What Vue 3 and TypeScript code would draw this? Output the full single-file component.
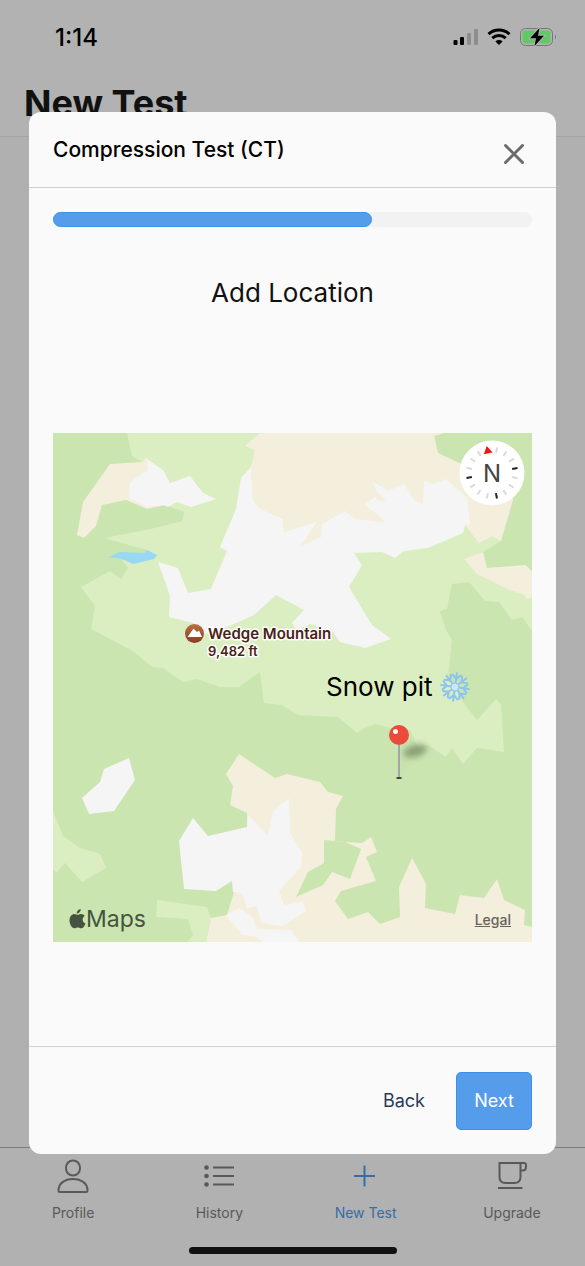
<script setup lang="ts">
import { computed, ref } from 'vue'

interface Tab {
  id: string
  label: string
}

const tabs: Tab[] = [
  { id: 'profile', label: 'Profile' },
  { id: 'history', label: 'History' },
  { id: 'new', label: 'New Test' },
  { id: 'upgrade', label: 'Upgrade' },
]

const activeTab = ref('new')
const step = ref(2)
const totalSteps = 3
const progress = computed(() => `${(step.value / totalSteps) * 100}%`)

// The compass is turned slightly west of north.
const heading = -11
const ticks = Array.from({ length: 16 }, (_, i) => ({
  angle: heading + i * 22.5,
  major: i % 4 === 0,
})).slice(1)
const flakeArms = [8, 53, 98, 143, 188, 233, 278, 323]
</script>

<template>
  <div class="screen">
    <div class="page">
      <div class="status">
        <span class="time">1:14</span>
        <svg class="status-icons" viewBox="0 0 104 20" width="104" height="20">
          <g>
            <rect x="0.5" y="13" width="4" height="5" rx="1" />
            <rect x="7" y="10" width="4" height="8" rx="1" />
            <rect class="faint" x="14" y="6" width="4" height="12" rx="1" />
            <rect class="faint" x="21" y="2" width="4" height="16" rx="1" />
          </g>
          <g class="wifi">
            <path d="M35.5 7.2A15.5 15.5 0 0 1 56.5 7.2" />
            <path d="M39.3 11.2A10 10 0 0 1 52.7 11.2" />
            <path class="solid" d="M46 18l-3.6-3.6a5.2 5.2 0 0 1 7.2 0z" />
          </g>
          <rect class="battery-case" x="67.5" y="1.5" width="32" height="17" rx="5" />
          <rect class="battery-level" x="69.5" y="3.5" width="28" height="13" rx="3" />
          <path class="battery-case-end" d="M102 7.500q2 2.500 0 5z" />
          <path class="bolt" d="M86.5 1L77 11.200h6L81.500 19 91 8.800h-6z" />
        </svg>
      </div>
      <header class="page-header"><h1>New Test</h1></header>
      <main class="page-body"></main>
      <nav class="tabs">
        <button
          v-for="tab in tabs"
          :key="tab.id"
          type="button"
          class="tab"
          :class="{ active: tab.id === activeTab }"
          @click="activeTab = tab.id"
        >
          <svg viewBox="0 0 40 40" width="40" height="40" class="tab-icon">
            <template v-if="tab.id === 'profile'">
              <rect x="13" y="4.500" width="14" height="15" rx="7" />
              <path d="M5.500 34.500C5.500 27.500 11.500 23 20 23s14.500 4.500 14.500 11.500c0 1-.5 1.500-1.500 1.500H7c-1 0-1.500-.5-1.500-1.500z" />
            </template>
            <template v-else-if="tab.id === 'history'">
              <path d="M14 11.500h21M14 20h21M14 28.500h21" />
              <g class="dots">
                <circle cx="7.500" cy="11.500" r="2.300" />
                <circle cx="7.500" cy="20" r="2.300" />
                <circle cx="7.500" cy="28.500" r="2.300" />
              </g>
            </template>
            <path v-else-if="tab.id === 'new'" d="M18.500 9.500v21M8 20h21" />
            <path
              v-else
              d="M28.500 7H32q2 0 2 2v2q0 3.500-3.500 3.500h-2M7.500 7h21v14q0 6-6 6h-9q-6 0-6-6zM6 32h24.500"
            />
          </svg>
          <span>{{ tab.label }}</span>
        </button>
      </nav>
      <div class="home"><i></i></div>
    </div>

    <div class="overlay">
      <section class="modal" role="dialog" aria-labelledby="dialog-title">
        <header class="modal-header">
          <h2 id="dialog-title">Compression Test (CT)</h2>
          <button type="button" class="close" aria-label="Close">
            <svg viewBox="0 0 24 24" width="24" height="24"><path d="M3.500 3.500l17 17M20.500 3.500l-17 17" /></svg>
          </button>
        </header>

        <div class="modal-body">
          <div class="track" role="progressbar" :aria-valuenow="step" aria-valuemin="0" :aria-valuemax="totalSteps">
            <div class="bar" :style="{ width: progress }"></div>
          </div>
          <h3>Add Location</h3>
          <div class="map-area">
            <div class="map">
              <svg class="terrain" viewBox="53 433 479 509">
                <defs>
                  <linearGradient id="peak-fill" x1="0" y1="0" x2="0" y2="1">
                    <stop offset="0" stop-color="#b8703f" />
                    <stop offset="1" stop-color="#8a3d25" />
                  </linearGradient>
                </defs>
                <rect class="forest" x="53" y="433" width="479" height="509" />
                <g class="meadow">
                  <path d="M127 433L132 456 142 462 163 505 184 512 182 521 150 529 104 538 147 550 150 555 122 560 128 568 121 579 110 571 81 587 95 606 91 629 133 651 152 667 163 668 183 682 197 679 220 687 239 687 260 672 264 703 282 705 298 715 338 717 357 733 363 729 375 724 390 728 410 730 417 746 428 745 446 757 452 748 463 764 477 748 504 752 501 704 496 699 477 720 465 705 448 678 452 640 446 630 440 611 447 609 452 584 469 582 485 601 499 602 512 620 522 617 532 631V433z" />
                  <path d="M53 811L63 836 80 848 100 854 106 868 82 882 65 863 57 872 53 870z" />
                  <path d="M157 900L207 907 211 918 206 942H187L193 935 188 919 156 917z" />
                </g>
                <path class="forest" d="M142 462L163 505 184 512 182 521 150 529 104 538 84 538 102 505 126 500 147 509z" />
                <path class="forest" d="M444 433L434 436 438 453 459 463 480 510 501 541 483 552 487 568 526 565 532 572V433z" />
                <g class="rock">
                  <path d="M260 433L245 446 255 450 251 467 253 501 261 509 283 519 284 532 318 521 300 547 400 535 440 510 465 525 479 543 492 536 501 541 513 500 505 470 459 463 438 453 434 436 444 433z" />
                  <path d="M464 559L483 552 487 568 526 565 532 572V597L527 599 523 594 509 590 477 574z" />
                  <path d="M110 464L142 462 147 457 152 470 150 500 165 505 147 509 126 500 102 505 96 526 84 538 77 535 83 502z" />
                  <path d="M239 754L275 778 287 774 320 782 328 792 343 796 336 809 335 841 345 842 362 843 371 837 377 852 366 857 376 881 341 891 335 901 348 919 368 912 380 924 400 917 399 887 412 858 426 884 425 908 455 914 460 895 484 898 497 879 504 900 525 910 524 925 532 927V942H206L211 918 227 915 234 892 247 870V813L230 805 233 786 226 774z" />
                </g>
                <path class="forest" d="M324 840L345 842 361 849 350 879 332 872 323 885 296 897 308 872 324 863z" />
                <g class="snow">
                  <path d="M251 467L241 478 236 509 220 547 227 551 211 589 188 593 178 568 158 562 170 596 169 617 193 623 205 634 227 627 254 615 276 595 304 610 292 623 297 630 310 624 333 632 340 642 365 648 391 639 372 625 349 587 362 565 354 553 382 552 395 558 404 551 428 548 463 533 465 525 470 524 467 498 446 479 434 484 424 481 423 504 414 500 404 484 388 491 373 482 377 492 386 500 378 501 375 497 364 505 381 517 387 527 383 522 355 519 345 511 322 524 321 537 300 547 318 521 284 532 283 519 261 509 253 501z" />
                  <path d="M147 459L163 470 170 483 190 476 203 493 216 499 191 507 177 502 168 507 163 505 147 507 129 498 130 482 148 470z" />
                  <path d="M129 758L135 780 114 811 89 814 82 798 100 782 104 769z" />
                  <path d="M193 818L208 836 247 827 248 815 268 836 273 811 289 798 290 833 302 853 301 867 290 879 279 891 284 905 303 902 306 911 292 920 282 926 261 923 257 906 247 908 242 893 233 892 232 881 216 891 184 889 179 841z" />
                  <path d="M226 915L239 908 253 917 257 929 291 930 300 942H263L254 936 242 935z" />
                </g>
                <path class="lake" d="M109 557L120 552 145 553 147 550 157 555 154 559 133 564 122 559z" />

                <circle class="peak" cx="194.500" cy="633.500" r="9.500" />
                <path class="peak-mark" d="M187.500 637L193.500 628.500 197 632 199 630.500 202 637z" />
                <text class="peak-name" x="208" y="639">Wedge Mountain</text>
                <text class="peak-height" x="208" y="656">9,482 ft</text>

                <text class="pit" x="326" y="696">Snow pit</text>
                <g transform="translate(455 687)" class="flake">
                  <path
                    v-for="arm in flakeArms"
                    :key="arm"
                    :transform="`rotate(${arm})`"
                    d="M0 0V-14M0-8l-4-4M0-8l4-4"
                  />
                  <circle r="4" />
                </g>

                <g class="shadow">
                  <path d="M400 776L405 755 420 742 427 748 408 756z" opacity=".2" />
                  <ellipse cx="415" cy="751" rx="12" ry="6" transform="rotate(-14 415 751)" />
                </g>
                <path class="needle" d="M399 745V777" />
                <path class="needle-foot" d="M396.500 778h5" />
                <circle class="pin" cx="399" cy="735" r="10" />
                <circle class="glint" cx="395.500" cy="731.500" r="2.500" />
              </svg>

              <button type="button" class="compass" aria-label="Compass">
                <svg viewBox="-33 -33 66 66" width="66" height="66">
                  <circle class="dial" r="32.500" />
                  <path
                    v-for="tick in ticks"
                    :key="tick.angle"
                    d="M0-26v5.500"
                    :class="tick.major ? 'tick major' : 'tick'"
                    :transform="`rotate(${tick.angle})`"
                  />
                  <path class="north" d="M0-27.500l4.500 7.500h-9z" transform="rotate(-11)" />
                  <text y="9">N</text>
                </svg>
              </button>

              <div class="brand">
                <svg viewBox="0 0 17 20" width="17" height="20">
                  <path d="M11.700 0c.2 2.300-1.700 4.500-3.900 4.500C7.500 2.300 9.500.3 11.700 0zM8.500 5.700c.8 0 2-.9 3.600-.8 1.600.1 2.900.8 3.700 2-3.200 2-2.700 6.200.7 7.500-.8 2.200-2.400 4.900-4.300 4.900-1.300 0-1.700-.8-3.400-.8s-2.200.8-3.500.8C2.900 19.300.5 15 .5 11.300c0-4 2.500-6.400 5-6.400 1.300 0 2.300.8 3 .8z" />
                </svg>
                <span>Maps</span>
              </div>
              <a class="legal" href="#legal">Legal</a>
            </div>
          </div>
        </div>

        <footer class="modal-footer">
          <button type="button" class="back" @click="step = Math.max(1, step - 1)">Back</button>
          <button type="button" class="next" @click="step = Math.min(totalSteps, step + 1)">Next</button>
        </footer>
      </section>
    </div>
  </div>
</template>

<style>
body {
  background: #b1b1b1;
}
</style>

<style scoped>
* {
  box-sizing: border-box;
}
h1,
h2,
h3 {
  margin: 0;
}
button {
  border: 0;
  padding: 0;
  background: none;
  font: inherit;
  color: inherit;
  cursor: pointer;
}
svg {
  display: block;
}
.screen {
  position: relative;
  min-height: 100vh;
  font-family: Inter, "Liberation Sans", sans-serif;
  color: #111;
}
.page {
  min-height: 100vh;
  display: flex;
  flex-direction: column;
  background: #b0b0b0;
}
.status {
  display: flex;
  justify-content: space-between;
  align-items: center;
  height: 74px;
  padding: 0 28px 0 55px;
  background: #b2b2b2;
}
.time {
  font-size: 24px;
  font-weight: 500;
  color: #000;
}
.faint {
  fill: #8d8d8d;
}
.wifi path {
  fill: none;
  stroke: #000;
  stroke-width: 3;
}
.wifi .solid {
  fill: #000;
  stroke: none;
}
.battery-case {
  fill: none;
  stroke: #777;
  stroke-width: 1;
}
.battery-case-end {
  fill: #777;
}
.battery-level {
  fill: #60c864;
}
.bolt {
  fill: #000;
  stroke: #b2b2b2;
  stroke-width: 2;
  paint-order: stroke;
}
.page-header {
  height: 63px;
  padding: 4px 24px 0;
  background: #b2b2b2;
  border-bottom: 1px solid #a3a3a3;
}
h1 {
  font-size: 36px;
  line-height: 50px;
  font-weight: 700;
}
.page-body {
  flex: 1;
}
.tabs {
  display: flex;
  padding-top: 8px;
  border-top: 1px solid #7d7d7d;
  background: #b1b1b1;
}
.tab {
  flex: 1;
  display: flex;
  flex-direction: column;
  align-items: center;
  gap: 7px;
  font-size: 14px;
  line-height: 20px;
  color: #595959;
}
.tab.active {
  color: #386ca6;
}
.tab-icon {
  fill: none;
  stroke: currentColor;
  stroke-width: 2;
}
.dots {
  fill: currentColor;
  stroke: none;
}
.home {
  display: flex;
  justify-content: center;
  padding: 24px 0 12px;
  background: #b1b1b1;
}
.home i {
  width: 208px;
  height: 7px;
  border-radius: 4px;
  background: #111;
}
.overlay {
  position: absolute;
  inset: 0;
  display: flex;
  padding: 112px 29px;
}
.modal {
  flex: 1;
  display: flex;
  flex-direction: column;
  background: #fafafa;
  border-radius: 12px;
}
.modal-header {
  display: flex;
  justify-content: space-between;
  align-items: center;
  height: 76px;
  padding: 0 30px 0 24px;
  border-bottom: 1px solid #d0d0d0;
}
h2 {
  font-size: 21px;
  line-height: 28px;
  font-weight: 500;
  color: #000;
}
.close {
  padding-top: 8px;
}
.close path {
  stroke: #6b6b6b;
  stroke-width: 3;
  stroke-linecap: round;
}
.modal-body {
  flex: 1;
  display: flex;
  flex-direction: column;
  padding: 24px 24px 0;
}
.track {
  height: 15px;
  border-radius: 8px;
  background: #f2f2f2;
}
.bar {
  height: 100%;
  border-radius: 8px;
  background: #559ceb;
  border: 1px solid #3592ef;
}
h3 {
  margin: 48px 0 18px;
  font-size: 26px;
  line-height: 36px;
  font-weight: 400;
  text-align: center;
}
.map-area {
  flex: 1;
  display: flex;
  align-items: center;
}
.map {
  position: relative;
  flex: 1;
}
.terrain {
  width: 100%;
}
.forest {
  fill: #cae5af;
}
.meadow {
  fill: #daeec2;
}
.rock {
  fill: #f4eedd;
}
.snow {
  fill: #f5f5f5;
}
.lake {
  fill: #98d8f5;
}
.peak {
  fill: url(#peak-fill);
}
.peak-mark {
  fill: #fff;
}
.peak-name,
.peak-height {
  fill: #4a2114;
  stroke: #fff;
  stroke-width: 3;
  stroke-linejoin: round;
  paint-order: stroke;
  font-weight: 600;
}
.peak-name {
  font-size: 15px;
}
.peak-height {
  font-size: 13px;
}
.pit {
  fill: #000;
  font-size: 26px;
}
.flake path {
  fill: none;
  stroke: #8cc4ee;
  stroke-width: 2;
  stroke-linecap: round;
}
.flake circle {
  fill: #c4eaf8;
  stroke: #8cc4ee;
}
.shadow {
  fill: #55654a;
  opacity: 0.55;
  filter: blur(3px);
}
.needle {
  stroke: #a5a5a5;
  stroke-width: 2;
}
.needle-foot {
  stroke: #3f4a38;
  stroke-width: 2;
}
.pin {
  fill: #ec4b3c;
}
.glint {
  fill: #fff;
}
.compass {
  position: absolute;
  top: 7px;
  right: 7px;
}
.dial {
  fill: #fff;
}
.tick {
  stroke: #dadada;
  stroke-width: 2;
}
.tick.major {
  stroke: #222;
}
.north {
  fill: #fb1414;
}
.compass text {
  fill: #444;
  font-size: 24px;
  text-anchor: middle;
}
.brand {
  position: absolute;
  left: 16px;
  bottom: 8px;
  display: flex;
  align-items: center;
  font-size: 23px;
  line-height: 30px;
  color: #465340;
}
.brand svg {
  fill: currentColor;
}
.legal {
  position: absolute;
  right: 21px;
  bottom: 12px;
  font-size: 14px;
  line-height: 20px;
  font-weight: 500;
  color: #66615a;
}
.modal-footer {
  display: flex;
  justify-content: flex-end;
  align-items: center;
  gap: 31px;
  height: 108px;
  padding: 0 24px;
  border-top: 1px solid #d0d0d0;
  font-size: 18px;
}
.back {
  color: #2b3a57;
}
.next {
  width: 76px;
  height: 58px;
  border: 1px solid #3592ef;
  border-radius: 5px;
  background: #559ceb;
  color: #fff;
}
</style>
